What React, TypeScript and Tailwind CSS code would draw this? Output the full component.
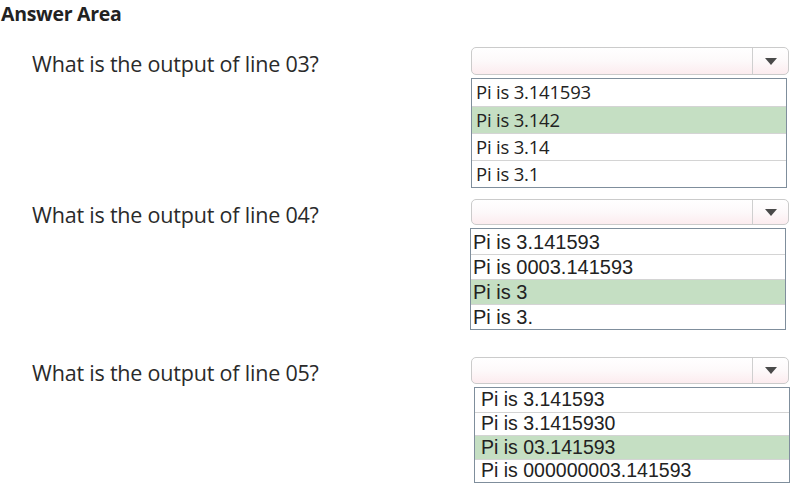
import React from "react"

type Option = { label: string; correct?: boolean }

type Question = {
  label: string
  options: Option[]
  font: string
  gap: string
  selectH: string
  rowH: string
  listShift: string
}

const questions: Question[] = [
  {
    label: "What is the output of line 03?",
    font: "font-['Open_Sans',sans-serif] text-[18.5px] pl-[4px] tracking-[-0.2px]",
    gap: "mt-[20px]",
    selectH: "h-[28px]",
    rowH: "h-[27px]",
    listShift: "ml-0",
    options: [
      { label: "Pi is 3.141593" },
      { label: "Pi is 3.142", correct: true },
      { label: "Pi is 3.14" },
      { label: "Pi is 3.1" },
    ],
  },
  {
    label: "What is the output of line 04?",
    font: "font-['Liberation_Sans',Arial,sans-serif] text-[20px] pl-[2px]",
    gap: "mt-[11px]",
    selectH: "h-[26px]",
    rowH: "h-[25px]",
    listShift: "-ml-px",
    options: [
      { label: "Pi is 3.141593" },
      { label: "Pi is 0003.141593" },
      { label: "Pi is 3", correct: true },
      { label: "Pi is 3." },
    ],
  },
  {
    label: "What is the output of line 05?",
    font: "font-['Liberation_Sans',Arial,sans-serif] text-[19.5px] pl-[6px]",
    gap: "mt-[27px]",
    selectH: "h-[27px]",
    rowH: "h-[23.5px]",
    listShift: "ml-[3px]",
    options: [
      { label: "Pi is 3.141593" },
      { label: "Pi is 3.1415930" },
      { label: "Pi is 03.141593", correct: true },
      { label: "Pi is 000000003.141593" },
    ],
  },
]

function Select({ height }: { height: string }) {
  return (
    <div
      className={`${height} w-[318px] flex rounded-[5px] border border-[#cbcbcb] bg-gradient-to-b from-white via-[#fdf9fa] to-[#fcecef]`}
    >
      <div className="flex-1" />
      <div className="w-[36px] border-l border-[#cfcfcf] flex items-center justify-center">
        <svg width="12" height="7" viewBox="0 0 12 7">
          <path d="M0 0 H12 L6 7 Z" fill="#4a4a4a" />
        </svg>
      </div>
    </div>
  )
}

function OptionList({ q }: { q: Question }) {
  return (
    <div className={`mt-[3px] w-[316px] ${q.listShift} border border-[#7f8e9c] bg-white`}>
      {q.options.map((o, i) => (
        <div
          key={o.label}
          className={`${q.rowH} flex items-center leading-none text-[#222] ${q.font} ${
            o.correct ? "bg-[#c5dfc3]" : "bg-white"
          } ${i > 0 ? "border-t border-[#d4d4d4]" : ""}`}
        >
          {o.label}
        </div>
      ))}
    </div>
  )
}

export default function App() {
  return (
    <div className="w-[792px] h-[489px] bg-white overflow-hidden text-[#222]">
      {/* header */}
      <h1 className="pl-[1px] text-[19.5px] leading-[27px] font-bold font-['Open_Sans',sans-serif] tracking-[-0.3px]">
        Answer Area
      </h1>

      {questions.map((q) => (
        <div key={q.label} className={`flex ${q.gap}`}>
          <div className="w-[471px] pl-[32px] pt-[3px]">
            <div
              className={`${q.selectH} flex items-center text-[21.5px] tracking-[-0.2px] font-['Open_Sans',sans-serif] text-[#2a2a2a]`}
            >
              {q.label}
            </div>
          </div>
          <div className="flex flex-col">
            <Select height={q.selectH} />
            <OptionList q={q} />
          </div>
        </div>
      ))}
    </div>
  )
}
